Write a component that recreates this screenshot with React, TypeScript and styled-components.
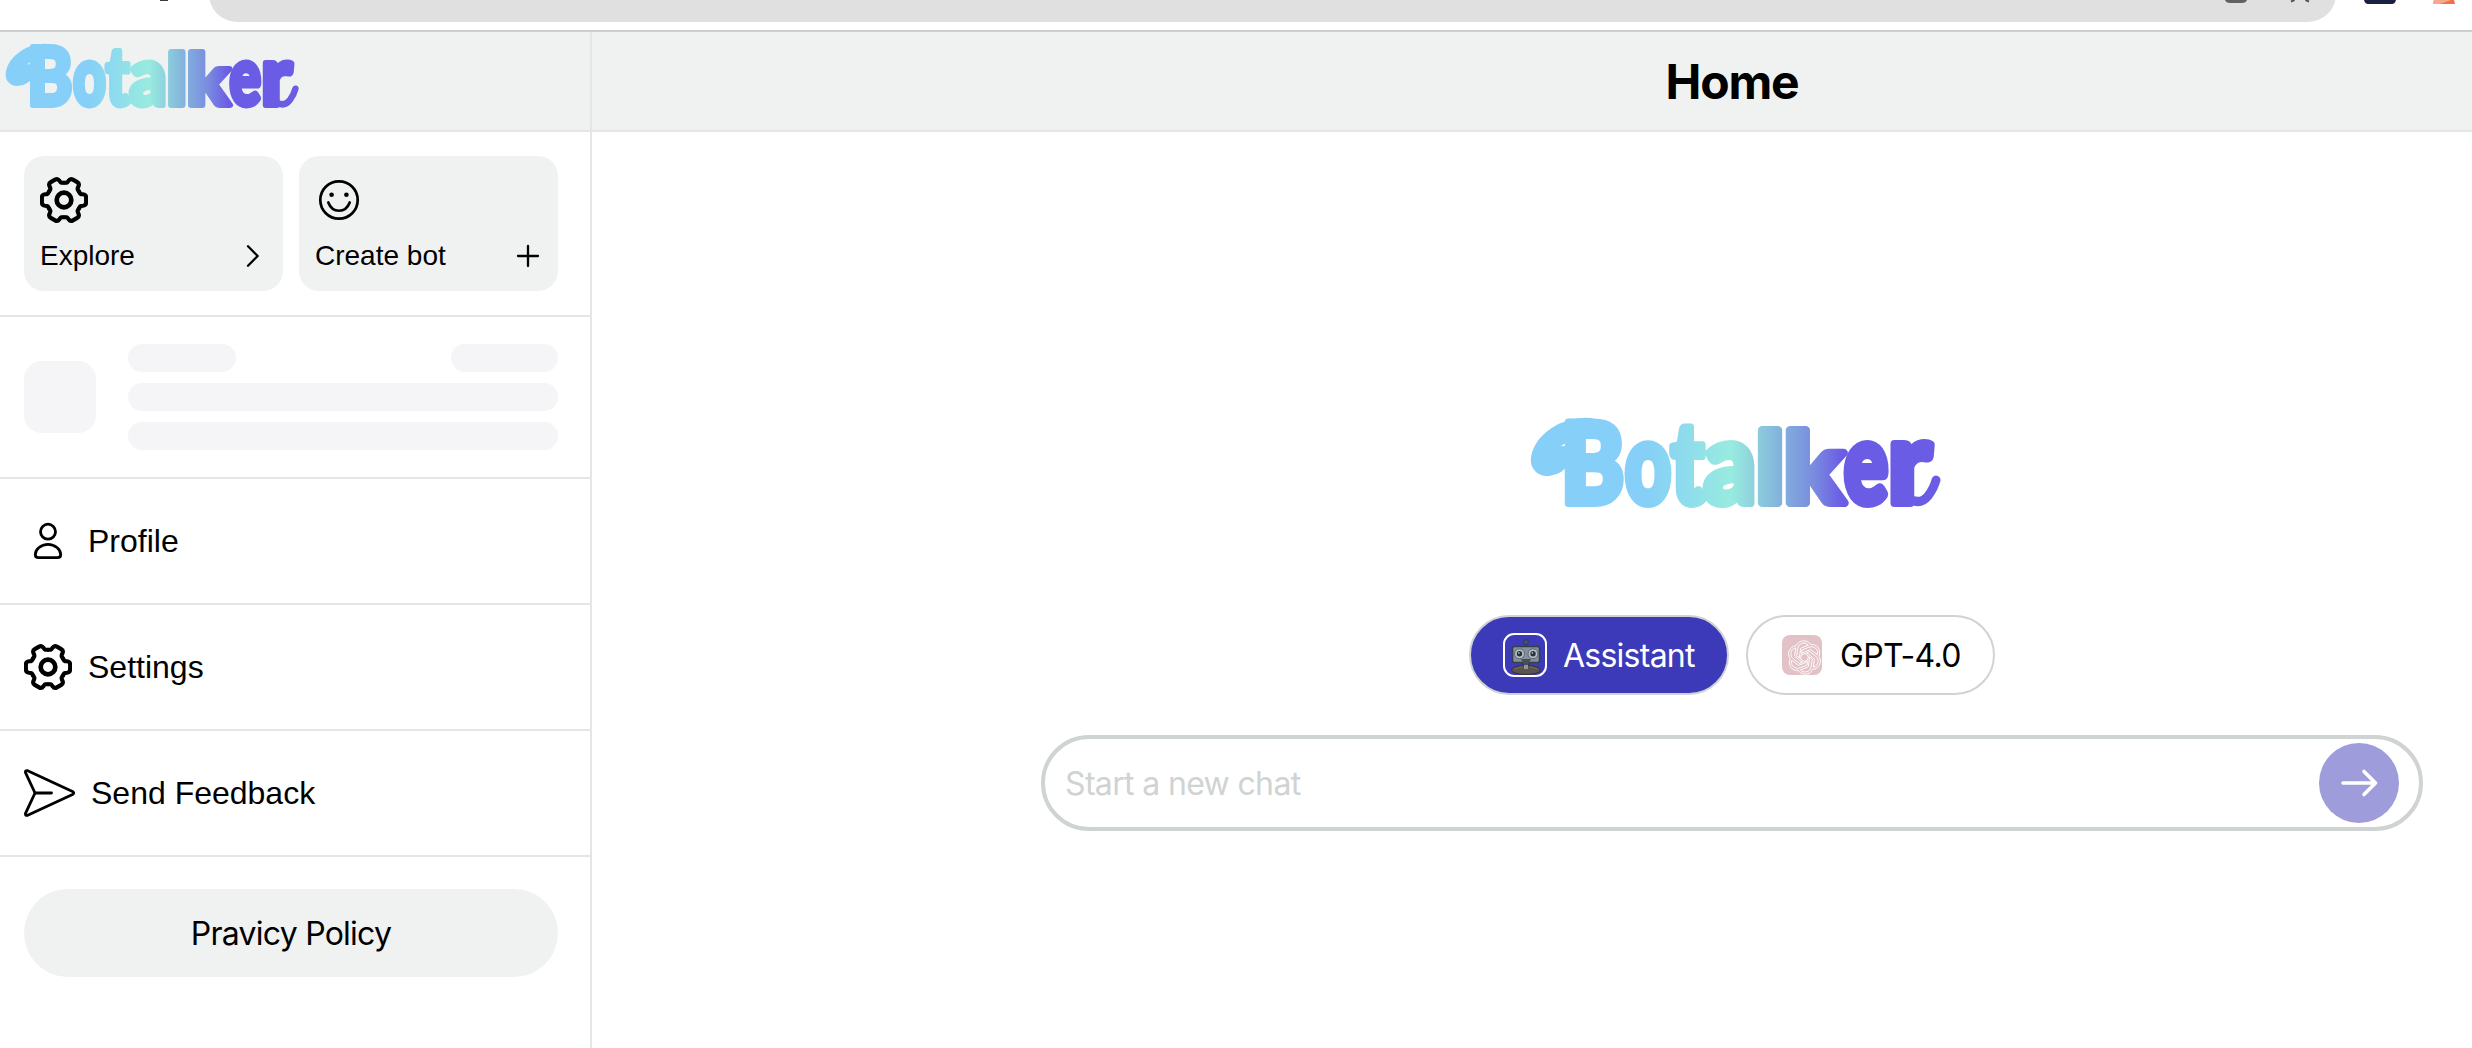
import React, { useState } from "react";
import styled, { createGlobalStyle } from "styled-components";
import { SiOpenai } from "react-icons/si";

const GlobalStyle = createGlobalStyle`
  * {
    box-sizing: border-box;
  }
  body {
    margin: 0;
    background: #ffffff;
    color: #000000;
    font-family: "Liberation Sans", Arial, sans-serif;
    overflow: hidden;
  }
  button, input {
    font: inherit;
    color: inherit;
  }
`;

const Root = styled.div`
  height: 1048px;
  display: flex;
  flex-direction: column;
  overflow: hidden;
`;

const BrowserBar = styled.div`
  height: 32px;
  flex: none;
  display: flex;
  align-items: flex-start;
  border-bottom: 2px solid #cccdcd;
`;

const ReloadEdge = styled.span`
  width: 8px;
  height: 1px;
  margin: 0 41px 0 160px;
  background: #3c3c3c;
`;

const AddressBar = styled.div`
  width: 2127px;
  height: 56px;
  margin-top: -34px;
  padding-right: 26px;
  display: flex;
  align-items: flex-end;
  justify-content: flex-end;
  gap: 43px;
  border-radius: 28px;
  background: #e0e0e0;
`;

const BarIcon = styled.svg`
  display: block;
  height: 22px;
`;

const ExtensionIcon = styled.svg<{ $gap: number }>`
  display: block;
  height: 4px;
  margin-left: ${(p) => p.$gap}px;
`;

const Body = styled.div`
  flex: 1;
  display: flex;
  min-height: 0;
`;

const Sidebar = styled.aside`
  width: 592px;
  flex: none;
  border-right: 2px solid #e4e5e5;
`;

const Header = styled.header<{ $center?: boolean }>`
  height: 100px;
  display: flex;
  justify-content: ${(p) => (p.$center ? "center" : "flex-start")};
  background: #f0f2f1;
  border-bottom: 2px solid #e4e5e5;
`;

const SmallLogo = styled.div`
  padding: 12px 0 0 5px;
`;

const CardSection = styled.section`
  display: flex;
  gap: 16px;
  padding: 24px 32px 24px 24px;
  border-bottom: 2px solid #e4e5e5;
`;

const Card = styled.button`
  flex: 1;
  height: 135px;
  padding: 20px 16px 18px;
  display: flex;
  flex-direction: column;
  justify-content: space-between;
  border: none;
  border-radius: 20px;
  background: #f0f2f1;
  text-align: left;
  cursor: pointer;
`;

const CardFooter = styled.div`
  display: flex;
  align-items: center;
  justify-content: space-between;
  font-size: 28px;
  line-height: 34px;
`;

const Icon = styled.svg`
  display: block;
  flex: none;
  fill: none;
  stroke: currentColor;
  stroke-linecap: round;
  stroke-linejoin: round;
`;

const SkeletonSection = styled.section`
  height: 162px;
  padding: 0 32px 0 24px;
  display: flex;
  align-items: center;
  gap: 32px;
  border-bottom: 2px solid #e4e5e5;
`;

const SkeletonAvatar = styled.div`
  width: 72px;
  height: 72px;
  flex: none;
  border-radius: 18px;
  background: #f5f5f8;
`;

const SkeletonLines = styled.div`
  flex: 1;
  display: flex;
  flex-direction: column;
  gap: 11px;
`;

const SkeletonRow = styled.div`
  display: flex;
  justify-content: space-between;
`;

const SkeletonBar = styled.div<{ $width?: string }>`
  width: ${(p) => p.$width || "100%"};
  height: 28px;
  border-radius: 14px;
  background: #f5f5f8;
`;

const MenuItem = styled.a`
  height: 126px;
  padding-left: 24px;
  display: flex;
  align-items: center;
  gap: 16px;
  border-bottom: 2px solid #e4e5e5;
  font-size: 32px;
  cursor: pointer;
`;

const PolicyButton = styled.button`
  display: block;
  width: 534px;
  height: 88px;
  margin: 32px 0 0 24px;
  border: none;
  border-radius: 44px;
  background: #f0f2f1;
  font-family: Inter, sans-serif;
  font-size: 32px;
  letter-spacing: -0.75px;
  cursor: pointer;
`;

const Main = styled.main`
  width: 2280px;
  flex: none;
`;

const Title = styled.h1`
  margin: 0;
  font-family: Inter, sans-serif;
  font-size: 48px;
  font-weight: 700;
  line-height: 99px;
  letter-spacing: -1.2px;
`;

const Content = styled.div`
  padding-top: 286px;
  display: flex;
  flex-direction: column;
  align-items: center;
`;

const LargeLogo = styled.div`
  padding-left: 6px;
`;

const BotTabs = styled.div`
  display: flex;
  gap: 17px;
  margin: 107px 0 40px;
`;

const BotTab = styled.button<{ $active?: boolean; $width: number }>`
  width: ${(p) => p.$width}px;
  height: 80px;
  padding: 0 0 0 32px;
  display: flex;
  align-items: center;
  border: 2px solid #cfd3d2;
  border-radius: 40px;
  background: ${(p) => (p.$active ? "#3c3ab8" : "#ffffff")};
  color: ${(p) => (p.$active ? "#ffffff" : "#000000")};
  font-family: Inter, sans-serif;
  font-size: 32px;
  cursor: pointer;
`;

const TabLabel = styled.span<{ $gap: number; $spacing: number }>`
  margin-left: ${(p) => p.$gap}px;
  letter-spacing: ${(p) => p.$spacing}px;
`;

const RobotFrame = styled.span`
  width: 44px;
  height: 44px;
  border: 2px solid #ffffff;
  border-radius: 11px;
  overflow: hidden;
`;

const GptFrame = styled.span`
  width: 40px;
  height: 40px;
  margin-left: 2px;
  display: flex;
  align-items: center;
  justify-content: center;
  border-radius: 8px;
  background: #e2c1c7;

  svg {
    width: 33px;
    height: 33px;
    overflow: visible;
    fill: none;
    stroke: #ffffff;
    stroke-width: 0.65px;
    transform: translate(2px, 2px) rotate(8deg);
  }
`;

const ChatBox = styled.form`
  width: 1382px;
  height: 96px;
  padding: 0 20px;
  display: flex;
  align-items: center;
  border: 4px solid #cfd3d2;
  border-radius: 48px;
`;

const ChatInput = styled.input`
  flex: 1;
  min-width: 0;
  padding: 0;
  border: none;
  outline: none;
  background: transparent;
  font-family: Inter, sans-serif;
  font-size: 32px;

  &::placeholder {
    color: #cfd3d2;
    opacity: 1;
    letter-spacing: -0.65px;
  }
`;

const SendButton = styled.button`
  width: 80px;
  height: 80px;
  padding: 0;
  display: flex;
  align-items: center;
  justify-content: center;
  border: none;
  border-radius: 50%;
  background: #9e9cdb;
  color: #ffffff;
`;

const LogoSvg = styled.svg`
  display: block;
  overflow: visible;

  text {
    font-family: Lato, sans-serif;
    font-weight: 900;
  }
`;

// letter, x, width, font size
const letters: [string, number, number, number][] = [
  ["B", 31, 63, 111],
  ["o", 95, 46, 113],
  ["t", 141, 33, 112],
  ["a", 174, 52, 113],
  ["l", 226, 28, 97],
  ["k", 254, 60, 97],
  ["e", 314, 44, 113],
  ["r", 358, 43, 114],
];

const Logo: React.FC<{ id: string; width: number; height: number }> = ({
  id,
  width,
  height,
}) => (
  <LogoSvg
    width={width}
    height={height}
    viewBox="0 0 411 90"
    preserveAspectRatio="none"
  >
    <defs>
      <linearGradient id={id} gradientUnits="userSpaceOnUse" x1="0" x2="411">
        <stop offset="0.28" stopColor="#85cff8" />
        <stop offset="0.49" stopColor="#98ebdf" />
        <stop offset="0.6" stopColor="#84b7dc" />
        <stop offset="0.69" stopColor="#7a8cdf" />
        <stop offset="0.76" stopColor="#6b5ce5" />
      </linearGradient>
    </defs>
    {/* flourishes before the B and after the r */}
    <g fill="none" stroke={`url(#${id})`} strokeLinecap="round">
      <path d="M60 10C34 8 14 25 11 40C9 52 25 50 33 38" strokeWidth="20" />
      <path d="M378 80Q390 88 398 78Q404 70 406 62" strokeWidth="9" />
    </g>
    <text
      y="85"
      fill={`url(#${id})`}
      stroke={`url(#${id})`}
      strokeWidth="8"
      strokeLinejoin="round"
    >
      {letters.map(([char, x, w, size]) => (
        <tspan
          key={x}
          x={x}
          fontSize={size}
          textLength={w}
          lengthAdjust="spacingAndGlyphs"
        >
          {char}
        </tspan>
      ))}
    </text>
  </LogoSvg>
);

const tooth =
  "M14.9 -8.6L16.2 -6.4Q17 -5.7 19 -5.7Q22.1 -5.4 22.1 -2.5V2.5Q22.1 5.4 19 5.7Q17 5.7 16.2 6.4L14.9 8.6";

const GearIcon = () => (
  <Icon width="48" height="48" viewBox="-24 -24 48 48" strokeWidth="4.1">
    {[0, 60, 120, 180, 240, 300].map((angle) => (
      <path key={angle} d={tooth} transform={`rotate(${angle})`} />
    ))}
    <circle r="7.3" strokeWidth="4.7" />
  </Icon>
);

const SmileIcon = () => (
  <Icon width="48" height="48" viewBox="0 0 48 48" strokeWidth="2.7">
    <circle cx="24" cy="24" r="18.7" />
    <path d="M13.3 26.5C17.5 37.5 30.5 37.5 34.7 26.5" />
    <circle cx="16.6" cy="18.7" r="2.3" fill="currentColor" stroke="none" />
    <circle cx="31.4" cy="18.7" r="2.3" fill="currentColor" stroke="none" />
  </Icon>
);

const UserIcon = () => (
  <Icon width="48" height="48" viewBox="0 0 48 48" strokeWidth="2.8">
    <circle cx="24" cy="14.7" r="7.5" />
    <path d="M24 27.3C17 27.3 11.3 32.5 11.3 37.5C11.3 39.5 12.5 40.7 14.5 40.7H33.5C35.5 40.7 36.7 39.5 36.7 37.5C36.7 32.5 31 27.3 24 27.3Z" />
  </Icon>
);

const PlaneIcon = () => (
  <Icon width="51" height="48" viewBox="0 0 51 48" strokeWidth="2.8">
    <path d="M11 24L1.5 3.7Q1 1 3.7 1.7L48.5 22.5Q51 24 48.5 25.5L3.7 46.3Q1 47 1.5 44.3Z" />
    <path d="M11 24H27.5" />
  </Icon>
);

const RobotIcon = () => (
  <svg width="40" height="40" viewBox="0 0 40 40">
    <ellipse cx="21" cy="35" rx="14.5" ry="4.5" fill="#5b534d" stroke="#34312e" />
    <path d="M9 34Q21 29 33 34" fill="none" stroke="#756c64" />
    <path d="M17 25H25V29L23 33H19L17 29Z" fill="#333d44" />
    <rect x="19" y="29" width="4" height="5" fill="#8e969a" />
    <path d="M21 12V7" stroke="#343e51" strokeWidth="2" />
    <circle cx="21" cy="7" r="2.3" fill="#4d5967" stroke="#303951" />
    <rect
      x="7.5"
      y="11.5"
      width="27"
      height="16"
      rx="2"
      fill="#85919a"
      stroke="#33404b"
      strokeWidth="1.6"
    />
    <path d="M16 24H26L23 30H19Z" fill="#444f55" />
    {[14.5, 28].map((cx) => (
      <g key={cx}>
        <circle cx={cx} cy="18.8" r="5" fill="#b4c0c6" stroke="#56636e" />
        <circle cx={cx} cy="18.8" r="2.7" fill="#25313b" />
        <circle cx={cx - 0.6} cy="18" r="0.8" fill="#e8edf0" />
      </g>
    ))}
  </svg>
);

const App: React.FC = () => {
  const [message, setMessage] = useState("");

  return (
    <Root>
      <GlobalStyle />
      <BrowserBar>
        <ReloadEdge />
        <AddressBar>
          <BarIcon width="22" viewBox="0 0 22 22">
            <path d="M0 0H22Q21 3 17 3H5Q1 3 0 0Z" fill="#626262" />
          </BarIcon>
          <BarIcon width="20" viewBox="0 0 20 22">
            <path d="M1 1.5L4.5 0M19 1.5L15.5 0" stroke="#555" strokeWidth="2" />
          </BarIcon>
        </AddressBar>
        <ExtensionIcon $gap={28} width="32" viewBox="0 0 32 4">
          <path d="M0 0H32Q31 4 28 4H4Q1 4 0 0Z" fill="#18213f" />
        </ExtensionIcon>
        <ExtensionIcon $gap={37} width="22" viewBox="0 0 22 4">
          <path d="M1 0H21L22 4H0Z" fill="#f07144" />
          <path d="M1 0H18L7 4H0Z" fill="#f6a88c" />
        </ExtensionIcon>
      </BrowserBar>
      <Body>
        <Sidebar>
          <Header>
            <SmallLogo>
              <Logo id="logo-small" width={294} height={65} />
            </SmallLogo>
          </Header>
          <CardSection>
            <Card>
              <GearIcon />
              <CardFooter>
                Explore
                <Icon
                  width="28"
                  height="28"
                  viewBox="0 0 28 28"
                  strokeWidth="2.3"
                >
                  <path d="M9 4.3L18.7 14L9 23.7" />
                </Icon>
              </CardFooter>
            </Card>
            <Card>
              <SmileIcon />
              <CardFooter>
                Create bot
                <Icon
                  width="28"
                  height="28"
                  viewBox="0 0 28 28"
                  strokeWidth="2.3"
                >
                  <path d="M14 4V24M4 14H24" />
                </Icon>
              </CardFooter>
            </Card>
          </CardSection>
          <SkeletonSection>
            <SkeletonAvatar />
            <SkeletonLines>
              <SkeletonRow>
                <SkeletonBar $width="108px" />
                <SkeletonBar $width="107px" />
              </SkeletonRow>
              <SkeletonBar />
              <SkeletonBar />
            </SkeletonLines>
          </SkeletonSection>
          <MenuItem>
            <UserIcon />
            Profile
          </MenuItem>
          <MenuItem>
            <GearIcon />
            Settings
          </MenuItem>
          <MenuItem>
            <PlaneIcon />
            Send Feedback
          </MenuItem>
          <PolicyButton>Pravicy Policy</PolicyButton>
        </Sidebar>
        <Main>
          <Header $center>
            <Title>Home</Title>
          </Header>
          <Content>
            <LargeLogo>
              <Logo id="logo-large" width={411} height={90} />
            </LargeLogo>
            <BotTabs>
              <BotTab $active $width={260}>
                <RobotFrame>
                  <RobotIcon />
                </RobotFrame>
                <TabLabel $gap={16} $spacing={-0.75}>
                  Assistant
                </TabLabel>
              </BotTab>
              <BotTab $width={249}>
                <GptFrame>
                  <SiOpenai />
                </GptFrame>
                <TabLabel $gap={18} $spacing={-0.7}>
                  GPT-4.0
                </TabLabel>
              </BotTab>
            </BotTabs>
            <ChatBox onSubmit={(e) => e.preventDefault()}>
              <ChatInput
                value={message}
                placeholder="Start a new chat"
                onChange={(e) => setMessage(e.target.value)}
              />
              <SendButton type="submit">
                <Icon
                  width="40"
                  height="40"
                  viewBox="0 0 40 40"
                  strokeWidth="3.6"
                >
                  <path d="M4 20H36.5M25 8.5L36.5 20L25 31.5" />
                </Icon>
              </SendButton>
            </ChatBox>
          </Content>
        </Main>
      </Body>
    </Root>
  );
};

export default App;
